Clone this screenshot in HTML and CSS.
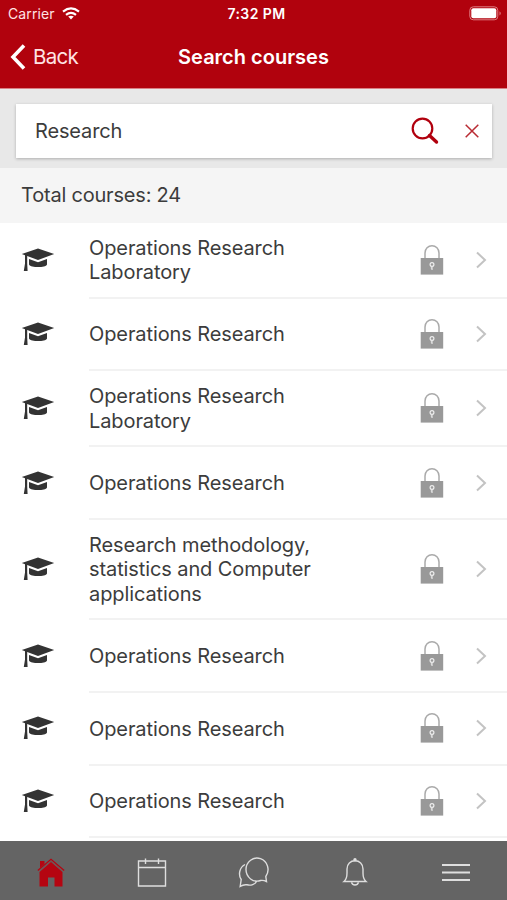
FILE: index.html
```html
<!DOCTYPE html>
<html lang="en">
<head>
<meta charset="utf-8">
<title>Search courses</title>
<link rel="stylesheet" href="styles.css">
</head>
<body>
<svg width="0" height="0" class="sprite" aria-hidden="true">
  <symbol id="cap" viewBox="0 0 34 24"><path d="M17 0.500L33.200 6 17 12 6.200 8.100V15.500L6.600 23H2.800L4 15.400V7.300L.8 6zM8 11L17 14.200 26 11V16.400C24.500 20 10 20 8 16.400z"/></symbol>
  <symbol id="lock" viewBox="0 0 24 32"><path d="M5 14.500V9a7 7.300 0 0 1 14 0v5.500" fill="none" stroke="#aaa" stroke-width="1.500"/><path d="M.7 14H23.200V30.600H.7z" fill="#999"/><circle cx="12" cy="20.500" r="1.900" fill="none" stroke="#eee" stroke-width="1.200"/><path d="M12 22.500V26M12 24H10.800" stroke="#eee" stroke-width="1.100"/></symbol>
  <symbol id="chev" viewBox="0 0 12 18"><path d="M2 1.500L10 9 2 16.500" fill="none" stroke="#c3c3c3" stroke-width="2"/></symbol>
</svg>
<div class="screen">
  <header class="header">
    <div class="status">
      <div class="carrier"><span>Carrier</span><svg width="18" height="13" viewBox="0 0 18 13"><g fill="none" stroke="#fff" stroke-width="2.200"><path d="M1 4.600Q9-1.800 17 4.600"/><path d="M4 7.800Q9 3.800 14 7.800"/></g><path d="M6.200 9.600Q9 7.800 11.800 9.600L9 12.600z" fill="#fff"/></svg></div>
      <div class="time">7:32 PM</div>
      <svg class="battery" width="33" height="15" viewBox="0 0 33 15"><rect x=".8" y=".8" width="28" height="13" rx="3.500" fill="none" stroke="#de7d82" stroke-width="1"/><rect x="2.300" y="2.300" width="25" height="10" rx="2" fill="#fff"/><path d="M30.500 5.200Q33 7.300 30.500 9.400z" fill="#de7d82"/></svg>
    </div>
    <div class="nav">
      <div class="back"><svg width="16" height="26" viewBox="0 0 16 26"><path d="M14 1.500L3 13 14 24.500" fill="none" stroke="#fff" stroke-width="3.600"/></svg><span>Back</span></div>
      <h1>Search courses</h1>
    </div>
  </header>
  <div class="search">
    <div class="field"><span>Research</span>
      <svg class="find" width="28" height="28" viewBox="0 0 28 28"><circle cx="11.500" cy="11.500" r="9.800" fill="none" stroke="#b1000e" stroke-width="2.200"/><path d="M18.500 18.500L25.500 25" stroke="#b1000e" stroke-width="3.400" stroke-linecap="round"/></svg>
      <svg width="14" height="14" viewBox="0 0 14 14"><path d="M.7.7L13.300 13.300M13.300.7L.7 13.300" stroke="#b92b33" stroke-width="1.500"/></svg>
    </div>
  </div>
  <div class="total">Total courses: 24</div>
  <main class="list">
    <div class="row"><svg class="cap"><use href="#cap"/></svg><div class="item"><span>Operations Research<br>Laboratory</span><svg class="lock"><use href="#lock"/></svg><svg class="chev"><use href="#chev"/></svg></div></div>
    <div class="row"><svg class="cap"><use href="#cap"/></svg><div class="item"><span>Operations Research</span><svg class="lock"><use href="#lock"/></svg><svg class="chev"><use href="#chev"/></svg></div></div>
    <div class="row"><svg class="cap"><use href="#cap"/></svg><div class="item"><span>Operations Research<br>Laboratory</span><svg class="lock"><use href="#lock"/></svg><svg class="chev"><use href="#chev"/></svg></div></div>
    <div class="row"><svg class="cap"><use href="#cap"/></svg><div class="item"><span>Operations Research</span><svg class="lock"><use href="#lock"/></svg><svg class="chev"><use href="#chev"/></svg></div></div>
    <div class="row"><svg class="cap"><use href="#cap"/></svg><div class="item"><span>Research methodology,<br>statistics and Computer<br>applications</span><svg class="lock"><use href="#lock"/></svg><svg class="chev"><use href="#chev"/></svg></div></div>
    <div class="row"><svg class="cap"><use href="#cap"/></svg><div class="item"><span>Operations Research</span><svg class="lock"><use href="#lock"/></svg><svg class="chev"><use href="#chev"/></svg></div></div>
    <div class="row"><svg class="cap"><use href="#cap"/></svg><div class="item"><span>Operations Research</span><svg class="lock"><use href="#lock"/></svg><svg class="chev"><use href="#chev"/></svg></div></div>
    <div class="row"><svg class="cap"><use href="#cap"/></svg><div class="item"><span>Operations Research</span><svg class="lock"><use href="#lock"/></svg><svg class="chev"><use href="#chev"/></svg></div></div>
  </main>
  <nav class="tabs">
    <svg viewBox="0 0 32 32"><g fill="#b50511"><path d="M5 4H9.500V7L5 11zM4.500 15L16 5 27.500 15V29.500H19.500V20.500H13V29.500H4.500z"/><path d="M2.800 13.500L16 2.300 29.200 13.500" fill="none" stroke="#b50511" stroke-width="1.200"/><path d="M4 14.200L16 4 28 14.200" fill="none" stroke="#7d4a4c" stroke-width=".8"/></g></svg>
    <svg viewBox="0 0 32 32"><path d="M2.500 4H29.500V29H2.500zM2.500 10.500H29.500M9.500 1.500V7M22.500 1.500V7"/></svg>
    <svg viewBox="0 0 32 32"><circle class="none" r="0"/><path d="M29.500 24.500L28.800 19.500A11 11.500 0 1 0 23.500 23.500Q26.500 23 29.500 24.500zM8 7.500C2.500 10.500 1 17.500 4.200 22.500L3.200 29.300Q6.500 27.300 10 27.800C14 28.800 18 27.300 19.500 24.500"/></svg>
    <svg viewBox="0 0 32 32"><path d="M5 24.500Q8 22 8 16V12C8 7 11.500 3.800 16 3.800S24 7 24 12V16Q24 22 27 24.500zM12.500 25.500A3.700 3.700 0 0 0 19.500 25.500"/><circle cx="16" cy="2.800" r="1" fill="#fff"/></svg>
    <svg viewBox="0 0 32 32"><path d="M2 8H30M2 15.500H30M2 23H30" stroke-width="1.800"/></svg>
  </nav>
</div>
</body>
</html>
```
FILE: styles.css
```css
* { box-sizing: border-box; }
body { margin: 0; font-family: Inter, "Liberation Sans", sans-serif; color: #3c3c3c; background: #fff; }
svg { display: block; flex: none; }
.sprite { display: none; }
.screen { display: flex; flex-direction: column; width: 507px; height: 900px; overflow: hidden; }
.header { flex: none; height: 89px; background: #b1020d; color: #fff; border-bottom: 1px solid #d98085; }
.status { display: grid; grid-template-columns: 1fr auto 1fr; align-items: center; height: 27px; padding: 0 5px 0 8px; font-size: 14px; }
.carrier { display: flex; align-items: center; gap: 7px; color: #ffe3e4; letter-spacing: .1px; }
.time { font-weight: 600; font-size: 14px; letter-spacing: .400px; margin-left: 3px; }
.battery { justify-self: end; }
.nav { display: grid; grid-template-columns: 1fr auto 1fr; align-items: center; height: 60px; padding: 0 10px; }
.back { display: flex; align-items: center; gap: 7px; font-size: 20.500px; letter-spacing: -0.700px; color: #ffe3e4; }
.back span { margin-top: -2px; }
.nav h1 { margin: 0; font-size: 20px; font-weight: 600; }
.search { flex: none; height: 79px; padding: 15px 15px 0 16px; background: #e8e8e8; }
.field { display: flex; align-items: center; height: 54px; padding: 0 13px 0 19px; background: #fff; box-shadow: 0 1px 3px rgba(0,0,0,.25); font-size: 20px; letter-spacing: -0.150px; }
.find { margin: 0 26px 0 auto; }
.total { flex: none; height: 54.500px; padding-left: 21px; line-height: 55px; background: #f5f5f5; font-size: 20px; letter-spacing: -0.200px; }
.list { flex: 1; min-height: 0; overflow: hidden; }
.row { display: grid; grid-template-columns: 68px 1fr; align-items: center; padding-left: 21px; }
.cap { width: 34px; height: 24px; margin-bottom: 2px; fill: #333; }
.item { display: flex; align-items: center; min-height: 72.700px; padding: 13.200px 20px 12px 0; border-bottom: 2px solid #f2f2f2; font-size: 20px; line-height: 24.400px; letter-spacing: -0.100px; }
.item span { flex: 1; white-space: nowrap; }
.lock { width: 24px; height: 32px; margin: -1px 31px 0 0; }
.chev { width: 12px; height: 18px; margin-top: -1px; }
.tabs { flex: none; display: grid; grid-template-columns: repeat(5, 1fr); justify-items: center; align-items: center; height: 59.500px; padding-top: 5px; background: #646464; }
.tabs svg { width: 32px; height: 32px; overflow: visible; fill: none; stroke: #dedede; stroke-width: 1.400; }
.tabs svg g { stroke: none; }
```
